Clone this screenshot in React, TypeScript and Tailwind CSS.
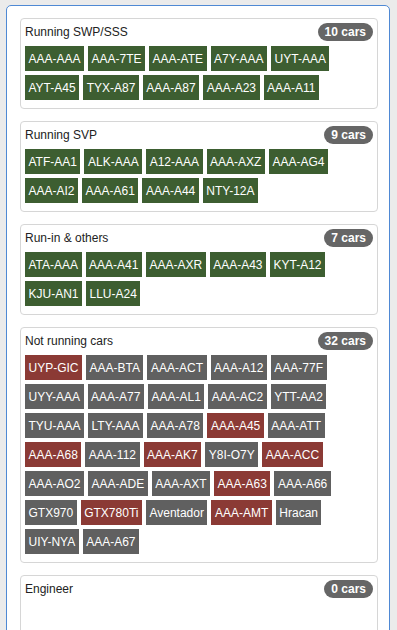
import React from 'react'

type Car = { name: string; down?: boolean }

interface Group {
  title: string
  tone: 'green' | 'gray'
  cars: Car[]
}

const mk = (names: string[], down: string[] = []): Car[] =>
  names.map((name) => ({ name, down: down.includes(name) }))

const groups: Group[] = [
  {
    title: 'Running SWP/SSS',
    tone: 'green',
    cars: mk(['AAA-AAA', 'AAA-7TE', 'AAA-ATE', 'A7Y-AAA', 'UYT-AAA', 'AYT-A45', 'TYX-A87', 'AAA-A87', 'AAA-A23', 'AAA-A11'])
  },
  {
    title: 'Running SVP',
    tone: 'green',
    cars: mk(['ATF-AA1', 'ALK-AAA', 'A12-AAA', 'AAA-AXZ', 'AAA-AG4', 'AAA-AI2', 'AAA-A61', 'AAA-A44', 'NTY-12A'])
  },
  {
    title: 'Run-in & others',
    tone: 'green',
    cars: mk(['ATA-AAA', 'AAA-A41', 'AAA-AXR', 'AAA-A43', 'KYT-A12', 'KJU-AN1', 'LLU-A24'])
  },
  {
    title: 'Not running cars',
    tone: 'gray',
    cars: mk(
      [
        'UYP-GIC', 'AAA-BTA', 'AAA-ACT', 'AAA-A12', 'AAA-77F',
        'UYY-AAA', 'AAA-A77', 'AAA-AL1', 'AAA-AC2', 'YTT-AA2',
        'TYU-AAA', 'LTY-AAA', 'AAA-A78', 'AAA-A45', 'AAA-ATT',
        'AAA-A68', 'AAA-112', 'AAA-AK7', 'Y8I-O7Y', 'AAA-ACC',
        'AAA-AO2', 'AAA-ADE', 'AAA-AXT', 'AAA-A63', 'AAA-A66',
        'GTX970', 'GTX780Ti', 'Aventador', 'AAA-AMT', 'Hracan',
        'UIY-NYA', 'AAA-A67'
      ],
      ['UYP-GIC', 'AAA-A45', 'AAA-A68', 'AAA-AK7', 'AAA-ACC', 'AAA-A63', 'GTX780Ti', 'AAA-AMT']
    )
  },
  { title: 'Engineer', tone: 'gray', cars: [] }
]

const CarTag: React.FC<{ car: Car; tone: Group['tone'] }> = ({ car, tone }) => {
  // rojo = parado, verde = rodando, gris = sin asignar
  const bg = car.down ? 'bg-[#8b3a35]' : tone === 'green' ? 'bg-[#3d5e31]' : 'bg-[#606060]'
  return (
    <span className={`${bg} h-[25px] px-[3.5px] flex items-center text-white text-[12px] leading-none`}>
      {car.name}
    </span>
  )
}

const GroupCard: React.FC<{ group: Group }> = ({ group }) => {
  const empty = group.cars.length === 0
  return (
    <div
      className={`border border-[#d6d6d6] rounded-[4px] bg-white pt-1 px-1 pb-2 ${empty ? 'min-h-[70px]' : ''}`}
    >
      {/* Header */}
      <div className="h-[18px] flex items-center justify-between">
        <span className="text-[12px] text-[#222]">{group.title}</span>
        <span className="h-[18px] px-[7px] rounded-full bg-[#666] text-white text-[12px] font-bold flex items-center">
          {group.cars.length} cars
        </span>
      </div>
      {!empty && (
        <div className="mt-[5px] flex flex-wrap gap-1">
          {group.cars.map((car) => (
            <CarTag key={car.name} car={car} tone={group.tone} />
          ))}
        </div>
      )}
    </div>
  )
}

export default function App() {
  return (
    <div
      className="min-h-screen bg-[#ebebeb] pt-[5px] pl-[6px]"
      style={{ fontFamily: '"Liberation Sans", Arial, sans-serif' }}
    >
      <div className="w-[384px] bg-white border border-[#4f89d4] rounded-[5px] pt-3 pl-[13px] pr-[11px] pb-3 flex flex-col gap-3">
        {groups.map((g) => (
          <GroupCard key={g.title} group={g} />
        ))}
      </div>
    </div>
  )
}
